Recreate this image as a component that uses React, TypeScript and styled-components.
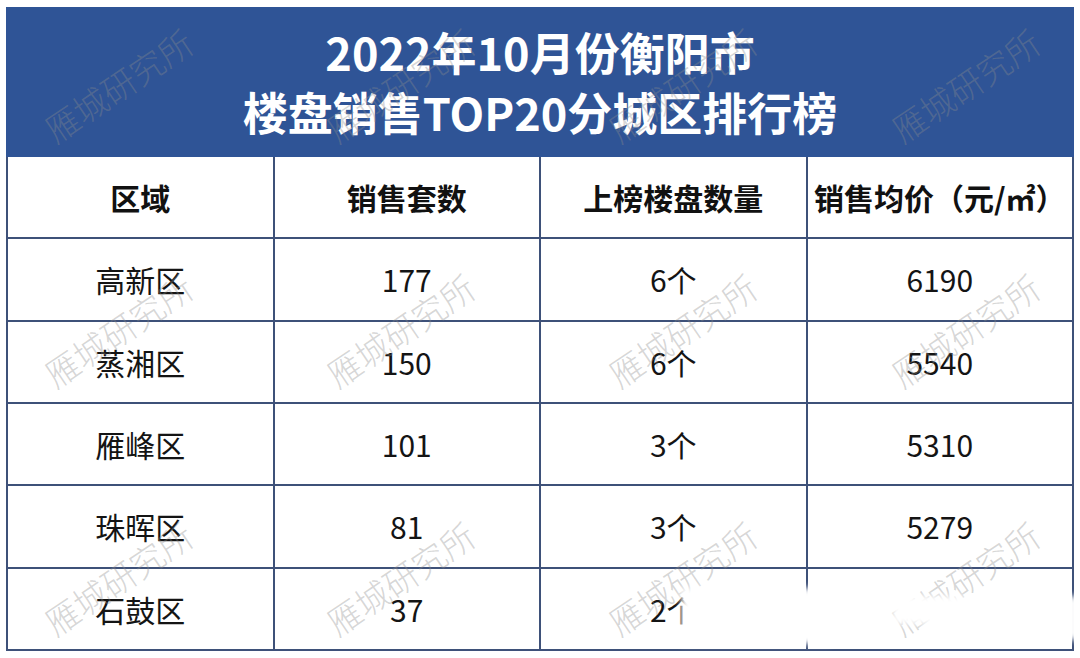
import React from "react";
import styled, { createGlobalStyle } from "styled-components";

const Global = createGlobalStyle`
  html, body { margin: 0; padding: 0; background: #ffffff; }
  body { font-family: "Noto Sans CJK SC", "Noto Sans", sans-serif; }
`;

const Page = styled.div`
  width: 1080px;
  height: 658px;
  padding: 7px 6px 0 6px;
  box-sizing: border-box;
  position: relative;
  overflow: hidden;
  background: #ffffff;
`;

const Board = styled.div`
  display: flex;
  flex-direction: column;
  width: 1068px;
`;

const TitleBar = styled.header`
  height: 150px;
  background: #2f5496;
  display: flex;
  flex-direction: column;
  align-items: center;
  justify-content: center;
  color: #ffffff;
  font-family: "Noto Sans CJK SC", sans-serif;
  font-weight: 700;
  font-size: 45px;
  line-height: 60px;
`;

const TitleLine = styled.div`
  white-space: nowrap;
`;

const Grid = styled.div`
  display: grid;
  grid-template-columns: repeat(4, 1fr);
  grid-template-rows: repeat(6, 1fr);
  height: 494px;
  border-left: 2px solid #3e5179;
  box-sizing: border-box;
`;

const Cell = styled.div<{ $head?: boolean }>`
  display: flex;
  align-items: center;
  justify-content: center;
  border-right: 2px solid #3e5179;
  border-bottom: 2px solid #3e5179;
  font-family: "Noto Sans CJK SC", sans-serif;
  font-size: ${(p) => (p.$head ? "30px" : "30px")};
  font-weight: ${(p) => (p.$head ? 700 : 400)};
  color: ${(p) => (p.$head ? "#111111" : "#141414")};
  white-space: nowrap;
`;

const MarkLayer = styled.div`
  position: absolute;
  inset: 0;
  pointer-events: none;
`;

const Mark = styled.span`
  position: absolute;
  transform: translate(-50%, -50%) rotate(-34deg);
  font-family: "Noto Sans CJK SC", sans-serif;
  font-weight: 300;
  font-size: 34px;
  color: rgba(140, 140, 140, 0.36);
  white-space: nowrap;
`;

const Smudge = styled.div<{ $x: number; $y: number; $w: number; $h: number; $b: number }>`
  position: absolute;
  left: ${(p) => p.$x}px;
  top: ${(p) => p.$y}px;
  width: ${(p) => p.$w}px;
  height: ${(p) => p.$h}px;
  background: #ffffff;
  filter: blur(${(p) => p.$b}px);
`;

const header = ["区域", "销售套数", "上榜楼盘数量", "销售均价（元/㎡）"];
const rows = [
  ["高新区", "177", "6个", "6190"],
  ["蒸湘区", "150", "6个", "5540"],
  ["雁峰区", "101", "3个", "5310"],
  ["珠晖区", "81", "3个", "5279"],
  ["石鼓区", "37", "2个", ""],
];

const markXs = [118, 400, 682, 965];
const markYs = [85, 330, 578];

export default function App() {
  return (
    <>
      <Global />
      <Page>
        <Board>
          <TitleBar>
            <TitleLine>2022年10月份衡阳市</TitleLine>
            <TitleLine>楼盘销售TOP20分城区排行榜</TitleLine>
          </TitleBar>
          <Grid>
            {header.map((h) => (
              <Cell key={h} $head>
                {h}
              </Cell>
            ))}
            {rows.map((r, i) =>
              r.map((v, j) => <Cell key={`${i}-${j}`}>{v}</Cell>)
            )}
          </Grid>
        </Board>
        <MarkLayer>
          {markYs.map((y) =>
            markXs.map((x) => (
              <Mark key={`${x}-${y}`} style={{ left: x, top: y }}>
                雁城研究所
              </Mark>
            ))
          )}
          <Smudge $x={681} $y={588} $w={150} $h={56} $b={3} />
          <Smudge $x={800} $y={596} $w={14} $h={42} $b={3} />
          <Smudge $x={893} $y={596} $w={72} $h={28} $b={3} />
          <Smudge $x={1066} $y={596} $w={14} $h={44} $b={3} />
        </MarkLayer>
      </Page>
    </>
  );
}
